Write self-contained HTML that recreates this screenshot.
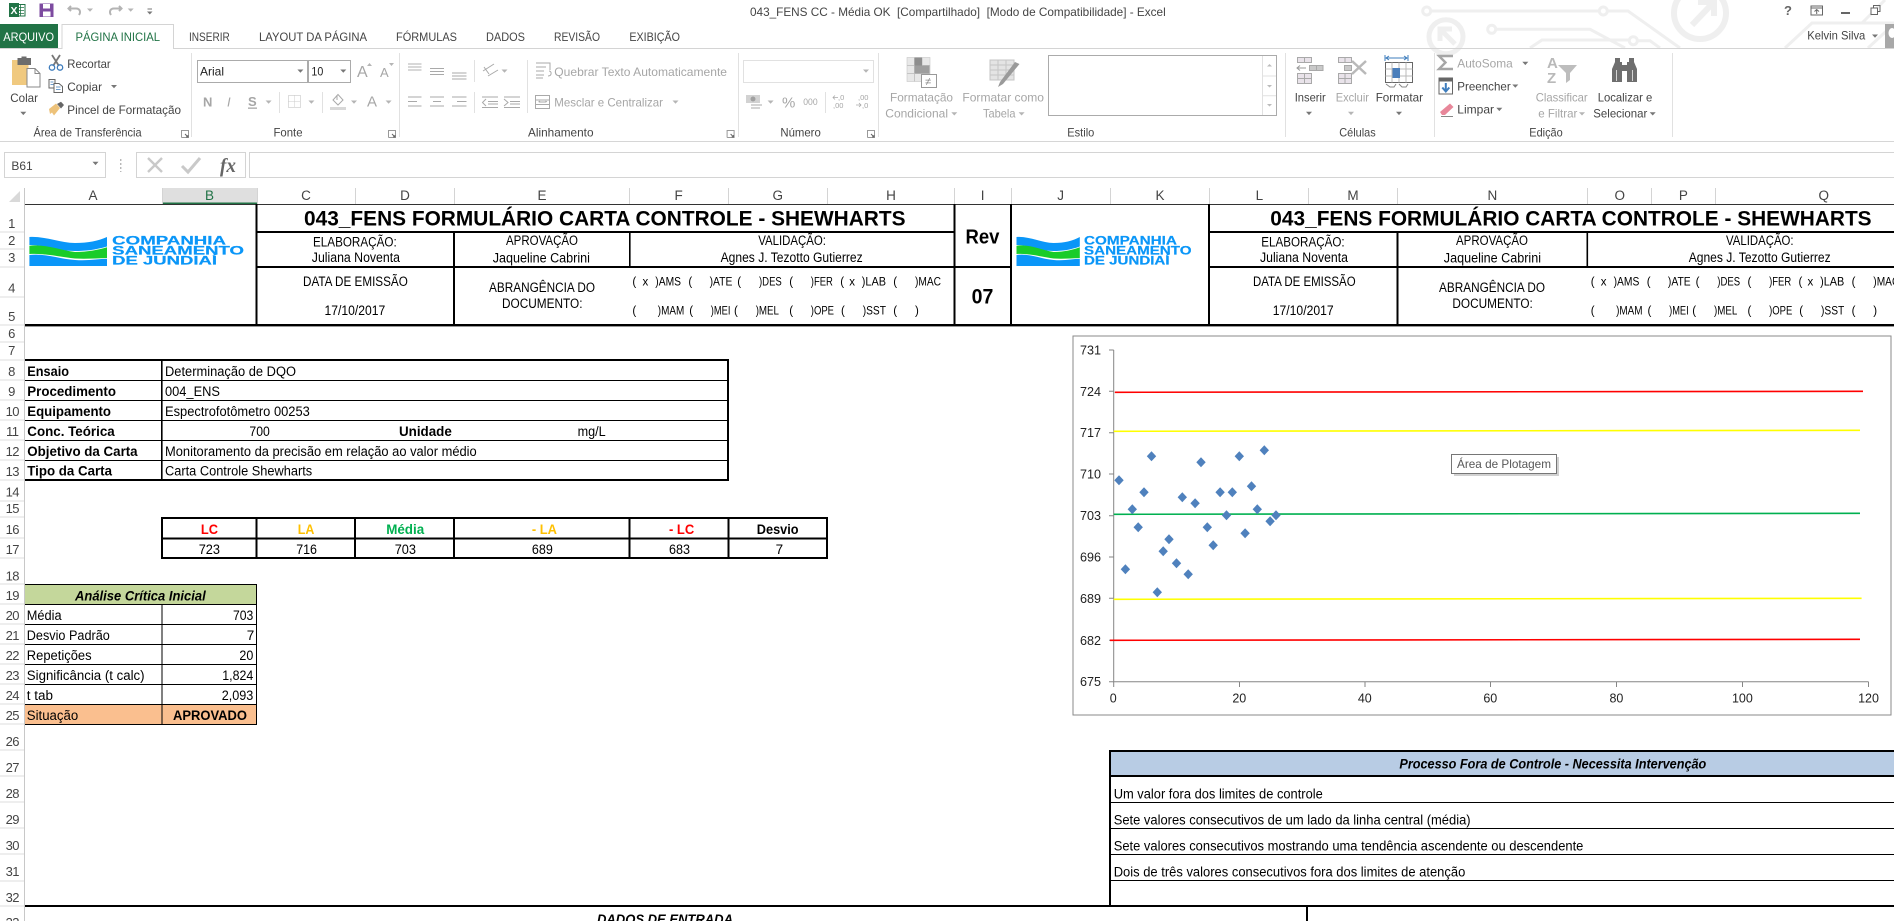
<!DOCTYPE html>
<html lang="pt"><head><meta charset="utf-8"><title>043_FENS CC - Média OK - Excel</title>
<style>
html,body{margin:0;padding:0;background:#fff;width:1894px;height:921px;overflow:hidden}
svg{display:block}
text{font-family:"Liberation Sans",Arial,sans-serif;font-size:13.5px;fill:#000;white-space:pre}
.rb text,.rb{font-size:12px;fill:#444}
.g,.rb .g{fill:#a6a6a6}
.tab{font-size:12px;fill:#444}
.h{font-size:13.5px;fill:#444;text-anchor:middle}
.n{font-size:13px;fill:#444;text-anchor:middle;letter-spacing:-.5px}
.b{font-weight:bold}
.i{font-style:italic}
.s{font-size:11.5px}
.ax{font-size:12.5px;fill:#222}
.lg{font-weight:bold;font-size:11.5px;fill:#0a96f8;stroke:#0a96f8;stroke-width:.2}
.ic{fill:none;stroke:#a9a9a9;stroke-width:1}
.cr{fill:none;stroke:#efefef;stroke-width:3}
</style></head><body>
<svg xmlns="http://www.w3.org/2000/svg" width="1894" height="921" viewBox="0 0 1894 921">
<defs>
<path id="ar" d="M-3 -1.5H3L0 1.8Z" fill="#777"/>
<path id="ag" d="M-3 -1.5H3L0 1.8Z" fill="#b5b5b5"/>
<path id="dg" d="M0 -5L4.7 0L0 5L-4.7 0Z" fill="#4f81bd"/>
<g id="launch" fill="none" stroke="#999"><path d="M-3.5 3.5V-3.5H3.5V3.5H-3.5"/><path d="M0 0L3 3M1 3H3V1" stroke="#666"/></g>
</defs>
<rect width="1894" height="921" fill="#fff"/>

<!-- circuit art -->
<g class="cr">
<circle cx="1426.7" cy="11" r="4"/><path d="M1430.7 11H1599.3"/><circle cx="1603.3" cy="11" r="4"/><path d="M1607.3 11H1628L1680 48"/>
<circle cx="1700" cy="13" r="26" stroke-width="6"/><path d="M1692 25L1712 4M1698 2H1714V16" stroke-width="6"/>
<circle cx="1446" cy="36.7" r="17" stroke-width="5"/><path d="M1455 44L1442 31M1440 41V29H1452" stroke-width="5"/>
<circle cx="1491.7" cy="29.3" r="4"/><path d="M1495.7 29.3H1590L1625 48"/>
<path d="M1530 48L1542 40H1629"/><circle cx="1633.3" cy="40.7" r="4"/><path d="M1637.3 40.7H1650L1660 48"/>
<path d="M1785 48L1812 23H1894M1862 23L1885 0M1868 48L1894 24"/>
</g>

<!-- quick access -->
<path d="M16 4.5H25V16H16Z" fill="#fff" stroke="#217346"/><path d="M18 7.5H24M18 10.5H24M18 13.5H24M20.5 5V15.5" stroke="#217346" stroke-width=".8"/>
<rect x="9" y="3" width="10" height="14" fill="#217346"/>
<text x="10.5" y="14" style="font-size:10.5px;font-weight:bold;fill:#fff">X</text>
<rect x="39.5" y="3.5" width="14" height="13.5" fill="#7d4ba0"/><rect x="43" y="4" width="7" height="4.5" fill="#fff"/><rect x="43" y="11.5" width="7.5" height="5" fill="#fff"/>
<path d="M71 6L68.5 8.5L71 11M69 8.5H76C80 8.5 81 12 79 15" fill="none" stroke="#b4b4b4" stroke-width="2"/>
<path d="M119 6L121.5 8.5L119 11M121 8.5H114C110 8.5 109 12 111 15" fill="none" stroke="#b4b4b4" stroke-width="2"/>
<use href="#ag" x="90" y="10"/><use href="#ag" x="130.7" y="10"/>
<path d="M147.5 9H152" stroke="#777"/><path d="M147 11.5H152.5L149.8 14.5Z" fill="#777"/>

<text x="750" y="16" class="tab" textLength="415.7" lengthAdjust="spacingAndGlyphs">043_FENS CC - Média OK  [Compartilhado]  [Modo de Compatibilidade] - Excel</text>

<!-- window controls -->
<text x="1784" y="15" style="font-size:13px;font-weight:bold;fill:#666">?</text>
<rect x="1811" y="6" width="11.5" height="9" fill="#fff" stroke="#666"/><path d="M1811 8H1822M1816.7 14V9.5M1814.5 11.5L1816.7 9.5L1819 11.5" fill="none" stroke="#666"/>
<rect x="1841" y="12" width="9" height="2" fill="#666"/>
<rect x="1873.5" y="5.5" width="6.5" height="6" fill="none" stroke="#666"/><rect x="1871" y="8" width="6.5" height="6.5" fill="#fff" stroke="#666"/>
<text x="1807.3" y="39.3" class="tab" textLength="58" lengthAdjust="spacingAndGlyphs">Kelvin Silva</text>
<use href="#ar" x="1875" y="36"/>
<rect x="1885" y="24" width="9" height="24" fill="#a8a8a8"/><ellipse cx="1892" cy="33" rx="3.5" ry="5" fill="#fff"/>

<!-- tabs -->
<rect x="0" y="24" width="58" height="25" fill="#217346"/>
<path d="M0 48.5H62M173.5 48.5H1894" stroke="#d4d4d4"/>
<path d="M62 49V24.5H173.5V49" fill="#fff" stroke="#d4d4d4"/>
<text x="3.3" y="41" class="tab" style="fill:#fff" textLength="50.7" lengthAdjust="spacingAndGlyphs">ARQUIVO</text>
<text x="75.5" y="41" class="tab" style="fill:#217346" textLength="84.5" lengthAdjust="spacingAndGlyphs">PÁGINA INICIAL</text>
<text x="189" y="41" class="tab" textLength="40.8" lengthAdjust="spacingAndGlyphs">INSERIR</text>
<text x="259" y="41" class="tab" textLength="108" lengthAdjust="spacingAndGlyphs">LAYOUT DA PÁGINA</text>
<text x="396" y="41" class="tab" textLength="61" lengthAdjust="spacingAndGlyphs">FÓRMULAS</text>
<text x="486" y="41" class="tab" textLength="39" lengthAdjust="spacingAndGlyphs">DADOS</text>
<text x="554" y="41" class="tab" textLength="46" lengthAdjust="spacingAndGlyphs">REVISÃO</text>
<text x="629.4" y="41" class="tab" textLength="50.6" lengthAdjust="spacingAndGlyphs">EXIBIÇÃO</text>

<!-- ribbon separators -->
<path d="M191.5 53V137M399.5 53V137M738.5 53V137M878.5 53V137M1285.5 53V137M1434.5 53V137M1672.5 53V137" stroke="#e1e1e1"/>
<path d="M0 141.5H1894" stroke="#d6d6d6"/>

<g class="rb">
<!-- clipboard -->
<rect x="12" y="60" width="16.5" height="25" fill="#f0c97f"/>
<rect x="17.5" y="58" width="13.5" height="7" fill="#6d6d6d"/><rect x="21.5" y="56.5" width="5" height="3" fill="#6d6d6d"/>
<path d="M27 68.5H35L40 73.5V87H27Z" fill="#fff" stroke="#888"/><path d="M35 68.5V73.5H40" fill="none" stroke="#888"/>
<text x="10.3" y="102" textLength="27.7" lengthAdjust="spacingAndGlyphs">Colar</text>
<use href="#ar" x="23.3" y="113.3"/>
<path d="M52 55L59 66M60 55L53 66" stroke="#777" stroke-width="1.8"/><circle cx="52" cy="67.5" r="2.7" fill="none" stroke="#3f7dbd" stroke-width="1.3"/><circle cx="60" cy="67.5" r="2.7" fill="none" stroke="#3f7dbd" stroke-width="1.3"/>
<text x="67.3" y="68" textLength="43.4" lengthAdjust="spacingAndGlyphs">Recortar</text>
<path d="M49 79.5H55L55 88H49Z" fill="#fff" stroke="#666"/><path d="M54 83.5H59L62.5 86.5V92.5H54Z" fill="#fff" stroke="#666"/><path d="M50.5 82H53.5M50.5 84.5H53.5M56 87H60.5M56 89.5H60.5" stroke="#3f7dbd" stroke-width=".8"/>
<text x="67.3" y="91" textLength="34.7" lengthAdjust="spacingAndGlyphs">Copiar</text>
<use href="#ar" x="114" y="86.5"/>
<path d="M49 109L56 103.5L60 108L54 115.5L52 112.5L50 114Z" fill="#edc27a"/><path d="M57 104L61 101.8L64 105L61 108.5Z" fill="#666"/>
<text x="67.3" y="114" textLength="113.7" lengthAdjust="spacingAndGlyphs">Pincel de Formatação</text>
<text x="33.5" y="136.5" textLength="108.1" lengthAdjust="spacingAndGlyphs">Área de Transferência</text>
<use href="#launch" x="185" y="134"/>

<!-- font -->
<rect x="197.5" y="60.5" width="110" height="22" fill="#fff" stroke="#ababab"/><rect x="308.5" y="60.5" width="42" height="22" fill="#fff" stroke="#ababab"/>
<text x="200" y="75.5" style="fill:#222" textLength="24" lengthAdjust="spacingAndGlyphs">Arial</text>
<text x="311.4" y="75.5" style="fill:#222" textLength="11.9" lengthAdjust="spacingAndGlyphs">10</text>
<use href="#ar" x="300.4" y="71"/><use href="#ar" x="343.3" y="71"/>
<text x="357" y="77" class="g" style="font-size:16px">A</text><text x="380" y="77" class="g" style="font-size:13px">A</text>
<path d="M367 66L369.5 63L372 66ZM389 63L391.5 66L394 63Z" fill="#b5b5b5"/>
<text x="203" y="106.5" class="g b" style="font-size:13px">N</text>
<text x="227" y="106.5" class="g i" style="font-size:13px">I</text>
<text x="248" y="106" class="g b" style="font-size:13px">S</text><rect x="248" y="107.5" width="9" height="1.3" fill="#a6a6a6"/>
<use href="#ag" x="268.6" y="102"/>
<path d="M279.5 92V113M322.5 92V113" stroke="#e1e1e1"/>
<rect x="288.5" y="95.5" width="12" height="12" fill="none" stroke="#bbb" stroke-dasharray="1 1"/><path d="M294.5 95.5V107.5M288.5 101.5H300.5" stroke="#ccc" stroke-dasharray="1 1"/>
<use href="#ag" x="311.4" y="102"/>
<path d="M333 100L338 94.5L343 100L338 105Z" fill="#fff" stroke="#a9a9a9"/><path d="M337 95V100" stroke="#a9a9a9"/><rect x="330" y="107" width="16" height="3" fill="#d8d8d8"/>
<use href="#ag" x="354" y="102"/>
<text x="367" y="106.7" class="g" style="font-size:15px">A</text>
<use href="#ag" x="388.6" y="102"/>
<text x="273.5" y="136.5" textLength="29" lengthAdjust="spacingAndGlyphs">Fonte</text>
<use href="#launch" x="392" y="134"/>

<!-- alignment -->
<g class="ic">
<path d="M408 64H421.5M408 67H421.5M408 70H421.5" opacity=".9"/>
<path d="M430 68.5H444M430 71.5H444M430 74.5H444"/>
<path d="M452 73H466.5M452 76H466.5M452 79H466.5"/>
<path d="M408 97H421.5M408 101.5H417M408 106H421.5"/>
<path d="M430 97H444M433 101.5H441M430 106H444"/>
<path d="M452 97H466.5M457 101.5H466.5M452 106H466.5"/>
<path d="M482 97H498M488 101.5H498M488 104H498M482 107.5H498M486 99L482.5 102.5L486 106"/>
<path d="M504 97H520M510 101.5H520M510 104H520M504 107.5H520M504 99L508 102.5L504 106"/>
<path d="M483 71L494 64M488 76L498 70M484 67L489 74"/>
<path d="M536 63H550V70M536 67H546M536 71H544M536 75H544M536 78H543M549 71C552 71 552 76 548 76" />
<rect x="535.5" y="95.5" width="14" height="13"/><path d="M535.5 100H549.5M535.5 104.5H549.5M539 102H546M538.5 102l1.5-1M547 102l-1.5-1"/>
</g>
<use href="#ag" x="504.5" y="71"/>
<path d="M474.5 60V82M474.5 92V113M527.5 60V113" stroke="#e1e1e1"/>
<text x="554.3" y="76" class="g" textLength="172.7" lengthAdjust="spacingAndGlyphs">Quebrar Texto Automaticamente</text>
<text x="554.3" y="106.7" class="g" textLength="108.7" lengthAdjust="spacingAndGlyphs">Mesclar e Centralizar</text>
<use href="#ag" x="675.5" y="102"/>
<text x="528" y="136.5" textLength="65.5" lengthAdjust="spacingAndGlyphs">Alinhamento</text>
<use href="#launch" x="730.6" y="134"/>

<!-- number -->
<rect x="743.5" y="60.5" width="130" height="22" fill="#fff" stroke="#e1e1e1"/>
<use href="#ag" x="866" y="71"/>
<rect x="746" y="95" width="14" height="8" fill="#d2d2d2"/><circle cx="753" cy="99" r="2.5" fill="#a0a0a0"/><path d="M751 105H762M751 108H760" stroke="#bbb" stroke-width="1.3"/>
<use href="#ag" x="770.6" y="102"/>
<text x="782" y="107.5" class="g" style="font-size:15px">%</text>
<text x="803.3" y="105" class="g" style="font-size:9px" textLength="14.3" lengthAdjust="spacingAndGlyphs">000</text>
<path d="M825.5 92V113" stroke="#e1e1e1"/>
<text x="838" y="100" class="g" style="font-size:7.5px">,0</text><text x="833" y="108" class="g" style="font-size:7.5px">,00</text>
<text x="858" y="100" class="g" style="font-size:7.5px">,00</text><text x="862" y="108" class="g" style="font-size:7.5px">,0</text>
<path d="M833 97.5H838M835 95.5L833 97.5L835 99.5M856 105H861M859 103L861 105L859 107" fill="none" stroke="#aaa" stroke-width=".8"/>
<text x="780.4" y="136.5" textLength="40.4" lengthAdjust="spacingAndGlyphs">Número</text>
<use href="#launch" x="871" y="134"/>

<!-- styles -->
<g fill="#e8e8e8" stroke="#c5c5c5" stroke-width=".6">
<rect x="907" y="57.5" width="23" height="24"/>
</g>
<path d="M914.5 57.5V81.5M922 57.5V81.5M907 65.5H930M907 73.5H930" stroke="#c5c5c5" fill="none"/>
<rect x="914.5" y="57.5" width="7.5" height="8" fill="#8e8e8e"/><rect x="914.5" y="65.5" width="15" height="8" fill="#9e9e9e"/>
<rect x="921.5" y="74.5" width="15" height="13" fill="#fff" stroke="#999"/>
<text x="925" y="85" class="g" style="font-size:11px;fill:#888">≠</text>
<text x="890" y="101.7" class="g" textLength="63" lengthAdjust="spacingAndGlyphs">Formatação</text>
<text x="885.3" y="117.7" class="g" textLength="62.7" lengthAdjust="spacingAndGlyphs">Condicional</text>
<use href="#ag" x="954.3" y="113.7"/>
<rect x="990" y="60" width="24" height="20" fill="#e4e4e4" stroke="#c5c5c5"/>
<path d="M990 65H1014M990 70H1014M990 75H1014M998 60V80M1006 60V80" stroke="#c5c5c5" fill="none"/>
<path d="M1019.5 64L1003 84L998 87L1000 82L1015 62Z" fill="#9a9a9a"/>
<text x="962.4" y="101.7" class="g" textLength="81.6" lengthAdjust="spacingAndGlyphs">Formatar como</text>
<text x="983" y="117.7" class="g" textLength="32.5" lengthAdjust="spacingAndGlyphs">Tabela</text>
<use href="#ag" x="1021.6" y="113.7"/>
<rect x="1048.5" y="55.5" width="228" height="60" fill="#fff" stroke="#ababab"/>
<path d="M1262.5 56V115M1262.5 76H1276M1262.5 95.7H1276" stroke="#e1e1e1"/>
<path d="M1267 66.5H1272L1269.5 64ZM1267 85H1272L1269.5 87.5ZM1267 102H1272M1267 104H1272L1269.5 106.5Z" fill="#bbb" stroke="none"/>
<text x="1067.3" y="136.5" textLength="27" lengthAdjust="spacingAndGlyphs">Estilo</text>

<!-- cells -->
<g fill="#e9e3ea" stroke="#a9a9a9">
<rect x="1297.5" y="57.5" width="7" height="5"/><rect x="1304.5" y="57.5" width="7" height="5"/>
<rect x="1309.5" y="65.5" width="7" height="5" fill="#c9c9c9"/><rect x="1316.5" y="65.5" width="6.5" height="5" fill="#c9c9c9"/>
<rect x="1297.5" y="73.5" width="7" height="5"/><rect x="1304.5" y="73.5" width="7" height="5"/><rect x="1297.5" y="78.5" width="7" height="5"/><rect x="1304.5" y="78.5" width="7" height="5"/>
<rect x="1338.5" y="57.5" width="6.5" height="5"/><rect x="1345" y="57.5" width="6.5" height="5"/>
<rect x="1344.5" y="65.5" width="7" height="5" fill="#c9c9c9"/>
<rect x="1338.5" y="73.5" width="6.5" height="5"/><rect x="1345" y="73.5" width="6.5" height="5"/><rect x="1338.5" y="78.5" width="6.5" height="5"/><rect x="1345" y="78.5" width="6.5" height="5"/>
</g>
<path d="M1297 68H1306M1300 65.5L1297 68L1300 70.5" fill="none" stroke="#999"/>
<path d="M1352 61L1366 74M1366 61L1352 74" stroke="#b9b9b9" stroke-width="2.5"/>
<text x="1294.7" y="101.7" textLength="31" lengthAdjust="spacingAndGlyphs">Inserir</text><use href="#ar" x="1309" y="113.3"/>
<text x="1335.7" y="101.7" class="g" textLength="33.3" lengthAdjust="spacingAndGlyphs">Excluir</text><use href="#ag" x="1351" y="113.3"/>
<text x="1375.7" y="101.7" textLength="47.3" lengthAdjust="spacingAndGlyphs">Formatar</text><use href="#ar" x="1399" y="113.3"/>
<rect x="1385.5" y="62.5" width="27" height="20" fill="#fff" stroke="#666"/>
<path d="M1385.5 69H1412.5M1385.5 76H1412.5M1392 62.5V82.5M1399 62.5V82.5M1406 62.5V82.5" stroke="#bbb" fill="none"/>
<rect x="1392.5" y="68" width="7.5" height="10" fill="#4a7ebb"/>
<path d="M1385 55V61M1408 55V61M1386 58H1407M1389 56L1386 58L1389 60M1404 56L1407 58L1404 60" fill="none" stroke="#3e7dbd"/>
<path d="M1386 84L1390 87H1394L1396 84M1399 84L1402 87H1406L1408 84" fill="none" stroke="#888"/>
<text x="1339.3" y="136.5" textLength="36.4" lengthAdjust="spacingAndGlyphs">Células</text>

<!-- editing -->
<path d="M1453 56H1439L1445.5 62.5L1439 69H1453" fill="none" stroke="#a6a6a6" stroke-width="2.4"/>
<text x="1457.3" y="67.3" class="g" textLength="55.4" lengthAdjust="spacingAndGlyphs">AutoSoma</text>
<use href="#ar" x="1525.3" y="63.3"/>
<rect x="1439" y="78" width="13.5" height="16" fill="#fff" stroke="#666"/><rect x="1439" y="78" width="13.5" height="3.5" fill="#666"/>
<path d="M1445.8 83V91.5M1442.3 87.5L1445.8 91.5L1449.3 87.5" fill="none" stroke="#3e7dbd" stroke-width="2"/>
<text x="1457.3" y="90.7" textLength="53.4" lengthAdjust="spacingAndGlyphs">Preencher</text>
<use href="#ar" x="1515.3" y="86"/>
<path d="M1440 112L1450 103.5L1453.5 107L1445 115H1442Z" fill="#e8879a"/><path d="M1441 116.5H1453" stroke="#888"/>
<text x="1457.3" y="113.5" textLength="36.7" lengthAdjust="spacingAndGlyphs">Limpar</text>
<use href="#ar" x="1499.3" y="109.3"/>
<text x="1547" y="68" class="g b" style="font-size:15px;fill:#b9b9b9">A</text><text x="1547" y="83" class="g b" style="font-size:15px;fill:#b9b9b9">Z</text>
<path d="M1558 65H1577L1570 73V80L1566 83V73Z" fill="#bdbdbd"/>
<text x="1535.7" y="101.7" class="g" textLength="52" lengthAdjust="spacingAndGlyphs">Classificar</text>
<text x="1538.3" y="117.7" class="g" textLength="39" lengthAdjust="spacingAndGlyphs">e Filtrar</text><use href="#ag" x="1582" y="113.7"/>
<path d="M1612 82V69L1615 62V58H1620V62H1622V82ZM1637 82V69L1634 62V58H1629V62H1627V82Z" fill="#6e6e6e"/>
<rect x="1622" y="65" width="5" height="6" fill="#6e6e6e"/>
<path d="M1616.5 70V81M1632.5 70V81" stroke="#fff" stroke-width=".7"/>
<text x="1597.7" y="101.7" textLength="54.6" lengthAdjust="spacingAndGlyphs">Localizar e</text>
<text x="1593.3" y="117.7" textLength="54" lengthAdjust="spacingAndGlyphs">Selecionar</text><use href="#ar" x="1652.7" y="113.7"/>
<text x="1529.3" y="136.5" textLength="33.4" lengthAdjust="spacingAndGlyphs">Edição</text>
</g>

<!-- formula bar -->
<rect x="4.5" y="152.5" width="101" height="25" fill="#fff" stroke="#d4d4d4"/>
<text x="11.4" y="170" style="font-size:12px;fill:#444" textLength="21.3" lengthAdjust="spacingAndGlyphs">B61</text>
<use href="#ar" x="95.5" y="163.3"/>
<path d="M120.8 159V172" stroke="#999" stroke-dasharray="2 2"/>
<rect x="136.5" y="152.5" width="109" height="25" fill="#fff" stroke="#d4d4d4"/>
<rect x="249.5" y="152.5" width="1645" height="25" fill="#fff" stroke="#d4d4d4"/>
<path d="M148 158L162 172M162 158L148 172" stroke="#c9c9c9" stroke-width="2.4"/>
<path d="M182 166L188 172L200 158" fill="none" stroke="#c9c9c9" stroke-width="3"/>
<text x="220" y="172" style="font-family:'Liberation Serif',serif;font-size:20px;font-style:italic;font-weight:bold;fill:#666" textLength="16" lengthAdjust="spacingAndGlyphs">fx</text>

<!-- column headers -->
<rect x="162" y="188" width="95" height="16" fill="#dfdfdf"/>
<rect x="162" y="202.5" width="95" height="2" fill="#217346"/>
<path d="M24.5 188V921" stroke="#c8c8c8"/>
<path d="M20 191V202H9Z" fill="#d9d9d9"/>
<path d="M162.5 188V204M257.5 188V204M355.5 188V204M454.5 188V204M629.5 188V204M728.5 188V204M827.5 188V204M954.5 188V204M1011.5 188V204M1110.5 188V204M1209.5 188V204M1308.5 188V204M1397.5 188V204M1587.5 188V204M1651.5 188V204M1715.5 188V204" stroke="#d4d4d4"/>
<g>
<text class="h" x="93" y="200">A</text><text class="h" x="209.5" y="200" style="fill:#217346">B</text><text class="h" x="306" y="200">C</text><text class="h" x="405" y="200">D</text><text class="h" x="542" y="200">E</text><text class="h" x="678.6" y="200">F</text><text class="h" x="777.8" y="200">G</text><text class="h" x="891" y="200">H</text><text class="h" x="982.6" y="200">I</text><text class="h" x="1060.6" y="200">J</text><text class="h" x="1160" y="200">K</text><text class="h" x="1259.4" y="200">L</text><text class="h" x="1353" y="200">M</text><text class="h" x="1492.4" y="200">N</text><text class="h" x="1619.7" y="200">O</text><text class="h" x="1683.4" y="200">P</text><text class="h" x="1823.8" y="200">Q</text>
</g>
<!-- row header separators -->
<path d="M0 232H24M0 249H24M0 267H24M0 297H24M0 325H24M0 342H24M0 360H24M0 380H24M0 400H24M0 420H24M0 440H24M0 460H24M0 480H24M0 501H24M0 517H24M0 538H24M0 558H24M0 584H24M0 604H24M0 624H24M0 644H24M0 664H24M0 684H24M0 704H24M0 724H24M0 750H24M0 776H24M0 802H24M0 828H24M0 854H24M0 881H24M0 906H24" stroke="#dcdcdc"/>
<g>
<text class="n" x="11.5" y="228">1</text><text class="n" x="11.5" y="245">2</text><text class="n" x="11.5" y="262">3</text><text class="n" x="11.5" y="292.5">4</text><text class="n" x="11.5" y="321">5</text><text class="n" x="11.5" y="338">6</text><text class="n" x="11.5" y="355">7</text><text class="n" x="11.5" y="376">8</text><text class="n" x="11.5" y="396">9</text>
<text class="n" x="12.3" y="416">10</text><text class="n" x="12.3" y="436">11</text><text class="n" x="12.3" y="456">12</text><text class="n" x="12.3" y="476">13</text><text class="n" x="12.3" y="496.5">14</text><text class="n" x="12.3" y="513">15</text><text class="n" x="12.3" y="534">16</text><text class="n" x="12.3" y="554">17</text><text class="n" x="12.3" y="580.5">18</text><text class="n" x="12.3" y="600">19</text><text class="n" x="12.3" y="620">20</text><text class="n" x="12.3" y="640">21</text><text class="n" x="12.3" y="660">22</text><text class="n" x="12.3" y="680">23</text><text class="n" x="12.3" y="700">24</text><text class="n" x="12.3" y="720">25</text><text class="n" x="12.3" y="746">26</text><text class="n" x="12.3" y="772">27</text><text class="n" x="12.3" y="798">28</text><text class="n" x="12.3" y="824">29</text><text class="n" x="12.3" y="850">30</text><text class="n" x="12.3" y="876">31</text><text class="n" x="12.3" y="902">32</text><text class="n" x="12.3" y="927">33</text>
</g>

<!-- title block lines -->
<g fill="#000">
<rect x="25" y="204" width="1869" height="1" fill="#333"/>
<rect x="257" y="231" width="697" height="2"/><rect x="1209" y="231" width="685" height="2"/>
<rect x="257" y="266" width="754" height="2"/><rect x="1209" y="266" width="685" height="2"/>
<rect x="25" y="324" width="1869" height="2.4"/>
<rect x="255.5" y="204" width="2" height="121"/><rect x="453" y="232" width="2" height="93"/><rect x="629" y="232" width="1.6" height="35"/>
<rect x="953.5" y="204" width="2" height="121"/><rect x="1010" y="204" width="2" height="121"/><rect x="1208" y="204" width="2" height="121"/>
<rect x="1396.5" y="232" width="2" height="93"/><rect x="1586.5" y="232" width="1.6" height="35"/>
</g>

<!-- logos -->
<g id="logo">
<path d="M29.4 237C45 236 60 243 75 243C88 243 98 241 107 237V246.5C95 250 85 251 75 251C58 251 45 245 29.4 245Z" fill="#0a96f8"/>
<path d="M29.4 245.7C45 244 60 250 75 252C88 252 98 250 107 247.3V258C95 258.5 85 259 75 258.5C60 257 45 253 29.4 254Z" fill="#19cc2a"/>
<path d="M29.4 255C45 253 60 259 75 260C88 261 98 259 107 258.8V266H29.4Z" fill="#0a96f8"/>
<text class="lg" x="112.2" y="244.3" textLength="113.8" lengthAdjust="spacingAndGlyphs">COMPANHIA</text>
<text class="lg" x="112.2" y="254.3" textLength="131.8" lengthAdjust="spacingAndGlyphs">SANEAMENTO</text>
<text class="lg" x="112.2" y="264.3" textLength="104.8" lengthAdjust="spacingAndGlyphs">DE JUNDIAÍ</text>
</g>
<g transform="translate(1016.5 0) scale(.8157 1) translate(-29.4 0)">
<path d="M29.4 237C45 236 60 243 75 243C88 243 98 241 107 237V246.5C95 250 85 251 75 251C58 251 45 245 29.4 245Z" fill="#0a96f8"/>
<path d="M29.4 245.7C45 244 60 250 75 252C88 252 98 250 107 247.3V258C95 258.5 85 259 75 258.5C60 257 45 253 29.4 254Z" fill="#19cc2a"/>
<path d="M29.4 255C45 253 60 259 75 260C88 261 98 259 107 258.8V266H29.4Z" fill="#0a96f8"/>
<text class="lg" x="112.2" y="244.3" textLength="113.8" lengthAdjust="spacingAndGlyphs">COMPANHIA</text>
<text class="lg" x="112.2" y="254.3" textLength="131.8" lengthAdjust="spacingAndGlyphs">SANEAMENTO</text>
<text class="lg" x="112.2" y="264.3" textLength="104.8" lengthAdjust="spacingAndGlyphs">DE JUNDIAÍ</text>
</g>

<!-- title block text -->
<text x="304" y="225.5" class="b" style="font-size:21.3px" textLength="601.5" lengthAdjust="spacingAndGlyphs">043_FENS FORMULÁRIO CARTA CONTROLE - SHEWHARTS</text>
<text x="1270.3" y="225.5" class="b" style="font-size:21.3px" textLength="601.3" lengthAdjust="spacingAndGlyphs">043_FENS FORMULÁRIO CARTA CONTROLE - SHEWHARTS</text>
<text x="313" y="246.3" textLength="83.7" lengthAdjust="spacingAndGlyphs">ELABORAÇÃO:</text>
<text x="311.8" y="262" textLength="88.2" lengthAdjust="spacingAndGlyphs">Juliana Noventa</text>
<text x="506" y="245" textLength="72" lengthAdjust="spacingAndGlyphs">APROVAÇÃO</text>
<text x="492.7" y="262.5" textLength="97.3" lengthAdjust="spacingAndGlyphs">Jaqueline Cabrini</text>
<text x="303" y="286" textLength="104.8" lengthAdjust="spacingAndGlyphs">DATA DE EMISSÃO</text>
<text x="324.5" y="315" textLength="60.8" lengthAdjust="spacingAndGlyphs">17/10/2017</text>
<text x="489" y="292" textLength="106" lengthAdjust="spacingAndGlyphs">ABRANGÊNCIA DO</text>
<text x="502" y="308" textLength="80.5" lengthAdjust="spacingAndGlyphs">DOCUMENTO:</text>
<text x="758.2" y="245" textLength="67.8" lengthAdjust="spacingAndGlyphs">VALIDAÇÃO:</text>
<text x="720.6" y="262" textLength="142.1" lengthAdjust="spacingAndGlyphs">Agnes J. Tezotto Gutierrez</text>

<text x="1261.3" y="246.3" textLength="83.3" lengthAdjust="spacingAndGlyphs">ELABORAÇÃO:</text>
<text x="1260" y="262" textLength="88" lengthAdjust="spacingAndGlyphs">Juliana Noventa</text>
<text x="1456" y="245" textLength="72" lengthAdjust="spacingAndGlyphs">APROVAÇÃO</text>
<text x="1443.8" y="262.5" textLength="97.2" lengthAdjust="spacingAndGlyphs">Jaqueline Cabrini</text>
<text x="1253" y="286" textLength="102.6" lengthAdjust="spacingAndGlyphs">DATA DE EMISSÃO</text>
<text x="1272.8" y="315" textLength="60.8" lengthAdjust="spacingAndGlyphs">17/10/2017</text>
<text x="1439" y="292" textLength="106" lengthAdjust="spacingAndGlyphs">ABRANGÊNCIA DO</text>
<text x="1452.4" y="308" textLength="80.4" lengthAdjust="spacingAndGlyphs">DOCUMENTO:</text>
<text x="1726" y="245" textLength="67.6" lengthAdjust="spacingAndGlyphs">VALIDAÇÃO:</text>
<text x="1688.7" y="262" textLength="142" lengthAdjust="spacingAndGlyphs">Agnes J. Tezotto Gutierrez</text>

<!-- scope checkboxes, first block -->
<g>
<text class="s" x="632.4" y="285.3">(</text><text class="s" x="642.5" y="285.3">x</text>
<text class="s" x="655.3" y="285.3" textLength="25.7" lengthAdjust="spacingAndGlyphs">)AMS</text><text class="s" x="688.4" y="285.3">(</text>
<text class="s" x="709.6" y="285.3" textLength="22.8" lengthAdjust="spacingAndGlyphs">)ATE</text><text class="s" x="737.3" y="285.3">(</text>
<text class="s" x="759" y="285.3" textLength="22.8" lengthAdjust="spacingAndGlyphs">)DES</text><text class="s" x="789.2" y="285.3">(</text>
<text class="s" x="810.8" y="285.3" textLength="22.1" lengthAdjust="spacingAndGlyphs">)FER</text><text class="s" x="840.2" y="285.3">(</text><text class="s" x="849.2" y="285.3">x</text>
<text class="s" x="861.8" y="285.3" textLength="24.2" lengthAdjust="spacingAndGlyphs">)LAB</text><text class="s" x="893.3" y="285.3">(</text>
<text class="s" x="915" y="285.3" textLength="26" lengthAdjust="spacingAndGlyphs">)MAC</text>
<text class="s" x="632.4" y="314.3">(</text>
<text class="s" x="657.8" y="314.3" textLength="26.5" lengthAdjust="spacingAndGlyphs">)MAM</text><text class="s" x="689.2" y="314.3">(</text>
<text class="s" x="710.8" y="314.3" textLength="19.6" lengthAdjust="spacingAndGlyphs">)MEI</text><text class="s" x="734" y="314.3">(</text>
<text class="s" x="755.7" y="314.3" textLength="23.3" lengthAdjust="spacingAndGlyphs">)MEL</text><text class="s" x="789.2" y="314.3">(</text>
<text class="s" x="810.8" y="314.3" textLength="23.2" lengthAdjust="spacingAndGlyphs">)OPE</text><text class="s" x="841" y="314.3">(</text>
<text class="s" x="862.7" y="314.3" textLength="23.3" lengthAdjust="spacingAndGlyphs">)SST</text><text class="s" x="893.3" y="314.3">(</text>
<text class="s" x="915" y="314.3">)</text>
</g>
<!-- scope checkboxes, second block -->
<g transform="translate(958.3 0)">
<text class="s" x="632.4" y="285.3">(</text><text class="s" x="642.5" y="285.3">x</text>
<text class="s" x="655.3" y="285.3" textLength="25.7" lengthAdjust="spacingAndGlyphs">)AMS</text><text class="s" x="688.4" y="285.3">(</text>
<text class="s" x="709.6" y="285.3" textLength="22.8" lengthAdjust="spacingAndGlyphs">)ATE</text><text class="s" x="737.3" y="285.3">(</text>
<text class="s" x="759" y="285.3" textLength="22.8" lengthAdjust="spacingAndGlyphs">)DES</text><text class="s" x="789.2" y="285.3">(</text>
<text class="s" x="810.8" y="285.3" textLength="22.1" lengthAdjust="spacingAndGlyphs">)FER</text><text class="s" x="840.2" y="285.3">(</text><text class="s" x="849.2" y="285.3">x</text>
<text class="s" x="861.8" y="285.3" textLength="24.2" lengthAdjust="spacingAndGlyphs">)LAB</text><text class="s" x="893.3" y="285.3">(</text>
<text class="s" x="915" y="285.3" textLength="26" lengthAdjust="spacingAndGlyphs">)MAC</text>
<text class="s" x="632.4" y="314.3">(</text>
<text class="s" x="657.8" y="314.3" textLength="26.5" lengthAdjust="spacingAndGlyphs">)MAM</text><text class="s" x="689.2" y="314.3">(</text>
<text class="s" x="710.8" y="314.3" textLength="19.6" lengthAdjust="spacingAndGlyphs">)MEI</text><text class="s" x="734" y="314.3">(</text>
<text class="s" x="755.7" y="314.3" textLength="23.3" lengthAdjust="spacingAndGlyphs">)MEL</text><text class="s" x="789.2" y="314.3">(</text>
<text class="s" x="810.8" y="314.3" textLength="23.2" lengthAdjust="spacingAndGlyphs">)OPE</text><text class="s" x="841" y="314.3">(</text>
<text class="s" x="862.7" y="314.3" textLength="23.3" lengthAdjust="spacingAndGlyphs">)SST</text><text class="s" x="893.3" y="314.3">(</text>
<text class="s" x="915" y="314.3">)</text>
</g>
<text x="965.5" y="243.3" class="b" style="font-size:20px" textLength="33.9" lengthAdjust="spacingAndGlyphs">Rev</text>
<text x="971.6" y="303.7" class="b" style="font-size:21.3px" textLength="21.7" lengthAdjust="spacingAndGlyphs">07</text>

<!-- info table -->
<g fill="#000">
<rect x="25" y="359" width="703.5" height="2"/><rect x="25" y="479" width="703.5" height="2"/>
<rect x="727" y="359" width="2" height="122"/><rect x="161" y="360" width="1.6" height="120"/>
<rect x="25" y="380" width="703" height="1"/><rect x="25" y="400" width="703" height="1"/><rect x="25" y="420" width="703" height="1"/><rect x="25" y="440" width="703" height="1"/><rect x="25" y="460" width="703" height="1"/>
</g>
<text x="27.3" y="376" class="b" textLength="41.7" lengthAdjust="spacingAndGlyphs">Ensaio</text>
<text x="27.3" y="396" class="b" textLength="88.7" lengthAdjust="spacingAndGlyphs">Procedimento</text>
<text x="27.3" y="416" class="b" textLength="83.7" lengthAdjust="spacingAndGlyphs">Equipamento</text>
<text x="27.3" y="436" class="b" textLength="87.4" lengthAdjust="spacingAndGlyphs">Conc. Teórica</text>
<text x="27.3" y="456" class="b" textLength="110.3" lengthAdjust="spacingAndGlyphs">Objetivo da Carta</text>
<text x="27.3" y="475.5" class="b" textLength="84.7" lengthAdjust="spacingAndGlyphs">Tipo da Carta</text>
<text x="165" y="376" textLength="131" lengthAdjust="spacingAndGlyphs">Determinação de DQO</text>
<text x="165" y="396" textLength="55" lengthAdjust="spacingAndGlyphs">004_ENS</text>
<text x="165" y="416" textLength="144.8" lengthAdjust="spacingAndGlyphs">Espectrofotômetro 00253</text>
<text x="249.4" y="436" textLength="20.4" lengthAdjust="spacingAndGlyphs">700</text>
<text x="399" y="436" class="b" textLength="52.8" lengthAdjust="spacingAndGlyphs">Unidade</text>
<text x="577.6" y="436" textLength="28.1" lengthAdjust="spacingAndGlyphs">mg/L</text>
<text x="165" y="456" textLength="311.7" lengthAdjust="spacingAndGlyphs">Monitoramento da precisão em relação ao valor médio</text>
<text x="165" y="475.5" textLength="147.2" lengthAdjust="spacingAndGlyphs">Carta Controle Shewharts</text>

<!-- limits table -->
<g fill="#000">
<rect x="161" y="517" width="667" height="2"/><rect x="161" y="537.5" width="667" height="2"/><rect x="161" y="557" width="667" height="2"/>
<rect x="161" y="517" width="2" height="42"/><rect x="255.5" y="517" width="2" height="42"/><rect x="354" y="517" width="2" height="42"/><rect x="453" y="517" width="2" height="42"/><rect x="628.5" y="517" width="2" height="42"/><rect x="727.5" y="517" width="2" height="42"/><rect x="826" y="517" width="2" height="42"/>
</g>
<text x="200.9" y="534" class="b" style="fill:#f00" textLength="17.1" lengthAdjust="spacingAndGlyphs">LC</text>
<text x="297.8" y="534" class="b" style="fill:#ffc000" textLength="16.6" lengthAdjust="spacingAndGlyphs">LA</text>
<text x="386.2" y="534" class="b" style="fill:#00b050" textLength="38" lengthAdjust="spacingAndGlyphs">Média</text>
<text x="531.9" y="534" class="b" style="fill:#ffc000" textLength="25.1" lengthAdjust="spacingAndGlyphs">- LA</text>
<text x="669" y="534" class="b" style="fill:#f00" textLength="25.2" lengthAdjust="spacingAndGlyphs">- LC</text>
<text x="756.8" y="534" class="b" textLength="41.8" lengthAdjust="spacingAndGlyphs">Desvio</text>
<text x="198.7" y="554" textLength="21.3" lengthAdjust="spacingAndGlyphs">723</text>
<text x="296.2" y="554" textLength="20.8" lengthAdjust="spacingAndGlyphs">716</text>
<text x="394.7" y="554" textLength="21.3" lengthAdjust="spacingAndGlyphs">703</text>
<text x="531.9" y="554" textLength="20.9" lengthAdjust="spacingAndGlyphs">689</text>
<text x="669" y="554" textLength="21" lengthAdjust="spacingAndGlyphs">683</text>
<text x="775.6" y="554">7</text>

<!-- analysis -->
<rect x="25" y="584" width="232" height="20" fill="#c4d79b"/>
<rect x="25" y="704" width="232" height="20" fill="#fabf8f"/>
<g fill="#000">
<rect x="25" y="584" width="232" height="1"/><rect x="25" y="604" width="232" height="1"/><rect x="25" y="624" width="232" height="1"/><rect x="25" y="644" width="232" height="1"/><rect x="25" y="664" width="232" height="1"/><rect x="25" y="684" width="232" height="1"/><rect x="25" y="704" width="232" height="1"/><rect x="25" y="724" width="232" height="1"/>
<rect x="161.5" y="604" width="1" height="120"/><rect x="256" y="584" width="1" height="141"/>
</g>
<text x="75" y="600.7" class="b i" textLength="130.7" lengthAdjust="spacingAndGlyphs">Análise Crítica Inicial</text>
<text x="26.8" y="620" textLength="34.8" lengthAdjust="spacingAndGlyphs">Média</text>
<text x="26.8" y="640" textLength="83" lengthAdjust="spacingAndGlyphs">Desvio Padrão</text>
<text x="26.8" y="660" textLength="64.8" lengthAdjust="spacingAndGlyphs">Repetições</text>
<text x="26.8" y="680" textLength="117.8" lengthAdjust="spacingAndGlyphs">Significância (t calc)</text>
<text x="26.8" y="700" textLength="26.2" lengthAdjust="spacingAndGlyphs">t tab</text>
<text x="26.8" y="720" textLength="51.4" lengthAdjust="spacingAndGlyphs">Situação</text>
<text x="233" y="620" textLength="20.3" lengthAdjust="spacingAndGlyphs">703</text>
<text x="246.8" y="640">7</text>
<text x="239.4" y="660" textLength="13.9" lengthAdjust="spacingAndGlyphs">20</text>
<text x="222.3" y="680" textLength="31" lengthAdjust="spacingAndGlyphs">1,824</text>
<text x="221.7" y="700" textLength="31.6" lengthAdjust="spacingAndGlyphs">2,093</text>
<text x="173" y="720" class="b" textLength="74" lengthAdjust="spacingAndGlyphs">APROVADO</text>

<!-- chart -->
<rect x="1073" y="336" width="818" height="379" fill="#fff" stroke="#8a8a8a"/>
<path d="M1113.7 350V681.7H1868.5" fill="none" stroke="#868686"/>
<path d="M1109 350H1113.7M1109 391.3H1113.7M1109 432.7H1113.7M1109 474H1113.7M1109 515.7H1113.7M1109 557H1113.7M1109 598.3H1113.7M1109 640.3H1113.7M1109 681.7H1113.7" stroke="#868686"/>
<path d="M1113.7 681.7V687M1239.5 681.7V687M1365 681.7V687M1490.5 681.7V687M1616.5 681.7V687M1742.5 681.7V687M1868.5 681.7V687" stroke="#868686"/>
<g class="ax">
<text class="ax" x="1080" y="354.5" textLength="21" lengthAdjust="spacingAndGlyphs">731</text>
<text class="ax" x="1080" y="395.8" textLength="21" lengthAdjust="spacingAndGlyphs">724</text>
<text class="ax" x="1080" y="437.2" textLength="21" lengthAdjust="spacingAndGlyphs">717</text>
<text class="ax" x="1080" y="478.5" textLength="21" lengthAdjust="spacingAndGlyphs">710</text>
<text class="ax" x="1080" y="520.2" textLength="21" lengthAdjust="spacingAndGlyphs">703</text>
<text class="ax" x="1080" y="561.5" textLength="21" lengthAdjust="spacingAndGlyphs">696</text>
<text class="ax" x="1080" y="602.8" textLength="21" lengthAdjust="spacingAndGlyphs">689</text>
<text class="ax" x="1080" y="644.8" textLength="21" lengthAdjust="spacingAndGlyphs">682</text>
<text class="ax" x="1080" y="686.2" textLength="21" lengthAdjust="spacingAndGlyphs">675</text>
<text class="ax" x="1113.2" y="702.5" text-anchor="middle">0</text>
<text class="ax" x="1239.3" y="702.5" text-anchor="middle">20</text>
<text class="ax" x="1364.8" y="702.5" text-anchor="middle">40</text>
<text class="ax" x="1490.3" y="702.5" text-anchor="middle">60</text>
<text class="ax" x="1616.4" y="702.5" text-anchor="middle">80</text>
<text class="ax" x="1742.4" y="702.5" text-anchor="middle">100</text>
<text class="ax" x="1868.5" y="702.5" text-anchor="middle">120</text>
</g>
<path d="M1114.8 392.3L1863 391.3" stroke="#ff0000" stroke-width="1.6" fill="none"/>
<path d="M1113.7 431.3L1860 430.3" stroke="#ffff00" stroke-width="1.6" fill="none"/>
<path d="M1113.7 514.3L1860 513.3" stroke="#00b050" stroke-width="1.6" fill="none"/>
<path d="M1113.7 599.3L1861.6 598.3" stroke="#ffff00" stroke-width="1.6" fill="none"/>
<path d="M1110 640.3L1860 639.3" stroke="#ff0000" stroke-width="1.6" fill="none"/>
<g>
<use href="#dg" x="1119" y="480.3"/><use href="#dg" x="1125.4" y="569.3"/><use href="#dg" x="1132.3" y="509.3"/><use href="#dg" x="1138.2" y="527.3"/><use href="#dg" x="1144" y="492.3"/><use href="#dg" x="1151.5" y="456.3"/><use href="#dg" x="1157.3" y="592.3"/><use href="#dg" x="1163.2" y="551.3"/><use href="#dg" x="1169" y="539.3"/><use href="#dg" x="1176.5" y="563.3"/><use href="#dg" x="1182.3" y="497.3"/><use href="#dg" x="1188.2" y="574.3"/><use href="#dg" x="1195.1" y="503.3"/><use href="#dg" x="1201" y="462.3"/><use href="#dg" x="1207.3" y="527.3"/><use href="#dg" x="1213.2" y="545.3"/><use href="#dg" x="1220.1" y="492.3"/><use href="#dg" x="1226.5" y="515.3"/><use href="#dg" x="1232.3" y="492.3"/><use href="#dg" x="1239.3" y="456.3"/><use href="#dg" x="1245.1" y="533.3"/><use href="#dg" x="1251.5" y="486.3"/><use href="#dg" x="1257.3" y="509.3"/><use href="#dg" x="1264.3" y="450.3"/><use href="#dg" x="1270.1" y="521.3"/><use href="#dg" x="1276" y="515.3"/>
</g>
<rect x="1454" y="457" width="105" height="19" fill="#bdbdbd" opacity=".7"/>
<rect x="1451.5" y="454.5" width="105" height="19" fill="#fff" stroke="#767676"/>
<text x="1457" y="468" style="font-size:12px;fill:#575757" textLength="94" lengthAdjust="spacingAndGlyphs">Área de Plotagem</text>

<!-- process table -->
<rect x="1110" y="751" width="784" height="25" fill="#b8cce4"/>
<g fill="#000">
<rect x="1109" y="750" width="785" height="2"/><rect x="1109" y="775" width="785" height="2"/>
<rect x="1109" y="750" width="2" height="156"/>
<rect x="1110" y="802" width="784" height="1"/><rect x="1110" y="828" width="784" height="1"/><rect x="1110" y="854" width="784" height="1"/><rect x="1110" y="880" width="784" height="1"/>
<rect x="25" y="905" width="1869" height="2"/><rect x="1306" y="906" width="2" height="15"/>
</g>
<text x="1399.4" y="768.3" class="b i" textLength="306.9" lengthAdjust="spacingAndGlyphs">Processo Fora de Controle - Necessita Intervenção</text>
<text x="1113.7" y="798.7" textLength="209.1" lengthAdjust="spacingAndGlyphs">Um valor fora dos limites de controle</text>
<text x="1113.7" y="824.7" textLength="356.9" lengthAdjust="spacingAndGlyphs">Sete valores consecutivos de um lado da linha central (média)</text>
<text x="1113.7" y="850.7" textLength="469.7" lengthAdjust="spacingAndGlyphs">Sete valores consecutivos mostrando uma tendência ascendente ou descendente</text>
<text x="1113.7" y="876.7" textLength="351.6" lengthAdjust="spacingAndGlyphs">Dois de três valores consecutivos fora dos limites de atenção</text>
<text x="597" y="924" class="b i" textLength="136" lengthAdjust="spacingAndGlyphs">DADOS DE ENTRADA</text>
</svg>
</body></html>
